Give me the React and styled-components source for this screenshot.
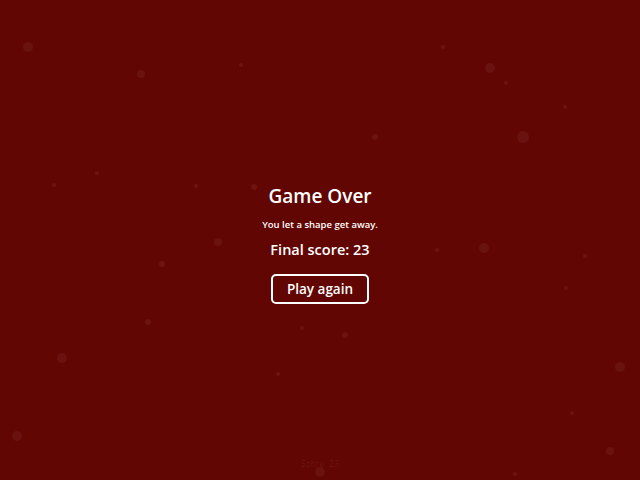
import styled, { createGlobalStyle } from "styled-components"

const Global = createGlobalStyle`
  html, body {
    margin: 0;
    padding: 0;
    background: #620603;
  }
  body {
    font-family: "Open Sans", "Noto Sans", sans-serif;
  }
`

const Screen = styled.div`
  position: relative;
  width: 640px;
  height: 480px;
  overflow: hidden;
  background: #620603;
  color: #fff;
  display: flex;
  flex-direction: column;
  align-items: center;
`

const Dot = styled.span`
  position: absolute;
  border-radius: 50%;
  background: rgba(255, 255, 255, ${p => p.$alpha || 0.05});
`

const Panel = styled.div`
  margin-top: 182px;
  display: flex;
  flex-direction: column;
  align-items: center;
`

const Title = styled.h1`
  margin: 0;
  font-size: 19px;
  font-weight: 600;
  line-height: 28px;
`

const Reason = styled.p`
  margin: 8px 0 0;
  font-size: 9.5px;
  font-weight: 600;
  line-height: 14px;
`

const Final = styled.p`
  margin: 8px 0 0;
  font-size: 14.5px;
  font-weight: 600;
  line-height: 20px;
`

const Button = styled.button`
  margin-top: 14px;
  width: 98px;
  height: 30px;
  box-sizing: border-box;
  border: 2px solid #fff;
  border-radius: 5px;
  background: transparent;
  color: #fff;
  font-family: inherit;
  font-size: 13.5px;
  font-weight: 600;
  cursor: pointer;
`

const Footer = styled.div`
  position: absolute;
  bottom: 10px;
  left: 0;
  right: 0;
  text-align: center;
  font-size: 9px;
  color: rgba(255, 255, 255, 0.08);
`

const dots = [
  [28, 47, 5], [141, 74, 4], [241, 65, 2], [490, 68, 5], [506, 83, 2],
  [443, 47, 2], [523, 137, 6], [375, 137, 3], [565, 107, 2], [97, 173, 2],
  [254, 187, 3], [218, 242, 4], [162, 264, 3], [484, 248, 5], [585, 256, 2],
  [566, 288, 2], [148, 322, 3], [62, 358, 5], [345, 335, 3], [302, 328, 2],
  [278, 374, 2], [620, 367, 5], [572, 413, 2], [17, 436, 5], [610, 451, 4],
  [515, 474, 2], [320, 472, 5], [437, 250, 2], [196, 186, 2], [54, 185, 2],
]

export default function App() {
  return (
    <Screen>
      <Global />
      {dots.map(([x, y, r], i) => (
        <Dot
          key={i}
          $alpha={r > 3 ? 0.05 : 0.06}
          style={{ left: x - r, top: y - r, width: r * 2, height: r * 2 }}
        />
      ))}
      <Panel>
        <Title>Game Over</Title>
        <Reason>You let a shape get away.</Reason>
        <Final>Final score: 23</Final>
        <Button>Play again</Button>
      </Panel>
      <Footer>Score: 23</Footer>
    </Screen>
  )
}
